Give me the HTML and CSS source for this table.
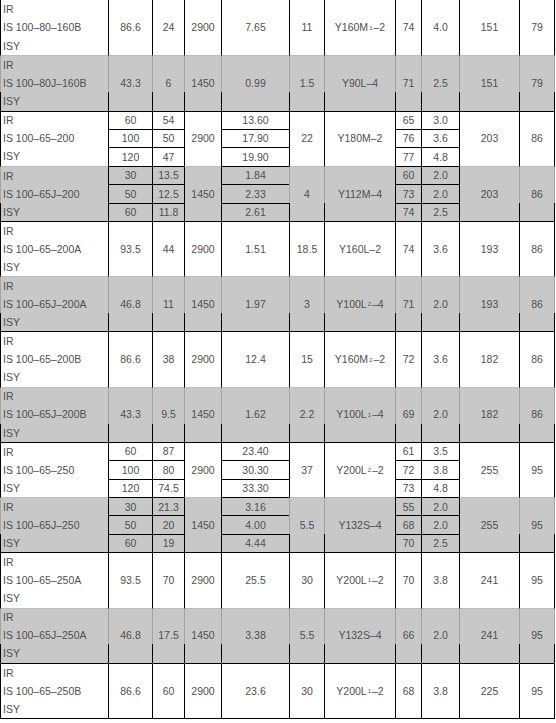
FILE: index.html
```html
<!DOCTYPE html>
<html>
<head>
<meta charset="utf-8">
<link rel="stylesheet" href="styles.css">
</head>
<body>
<div class="sheet">
  <div class="row w">
    <div class="c m name"><span>IR</span><span>IS 100–80–160B</span><span>ISY</span></div>
    <div class="c m">86.6</div><div class="c m">24</div><div class="c m">2900</div><div class="c m">7.65</div>
    <div class="c m">11</div><div class="c m">Y160M<span class="sub">1</span>–2</div><div class="c m">74</div><div class="c m">4.0</div>
    <div class="c m">151</div><div class="c m end">79</div>
  </div>
  <div class="row g">
    <div class="c m name"><span>IR</span><span>IS 100–80J–160B</span><span>ISY</span></div>
    <div class="c m">43.3</div><div class="c m">6</div><div class="c m">1450</div><div class="c m">0.99</div>
    <div class="c m">1.5</div><div class="c m">Y90L–4</div><div class="c m">71</div><div class="c m">2.5</div>
    <div class="c m">151</div><div class="c m end">79</div>
  </div>
  <div class="row w">
    <div class="c m name"><span>IR</span><span>IS 100–65–200</span><span>ISY</span></div>
    <div class="c">60</div><div class="c">54</div><div class="c m">2900</div><div class="c">13.60</div>
    <div class="c m">22</div><div class="c m">Y180M–2</div><div class="c">65</div><div class="c">3.0</div>
    <div class="c m">203</div><div class="c m end">86</div>
    <div class="c">100</div><div class="c">50</div><div class="c">17.90</div><div class="c">76</div><div class="c">3.6</div>
    <div class="c">120</div><div class="c">47</div><div class="c">19.90</div><div class="c">77</div><div class="c">4.8</div>
  </div>
  <div class="row g">
    <div class="c m name"><span>IR</span><span>IS 100–65J–200</span><span>ISY</span></div>
    <div class="c">30</div><div class="c">13.5</div><div class="c m k">1450</div><div class="c">1.84</div>
    <div class="c m">4</div><div class="c m">Y112M–4</div><div class="c">60</div><div class="c">2.0</div>
    <div class="c m k">203</div><div class="c m end">86</div>
    <div class="c">50</div><div class="c">12.5</div><div class="c">2.33</div><div class="c">73</div><div class="c">2.0</div>
    <div class="c">60</div><div class="c">11.8</div><div class="c">2.61</div><div class="c">74</div><div class="c">2.5</div>
  </div>
  <div class="row w">
    <div class="c m name"><span>IR</span><span>IS 100–65–200A</span><span>ISY</span></div>
    <div class="c m">93.5</div><div class="c m">44</div><div class="c m">2900</div><div class="c m">1.51</div>
    <div class="c m">18.5</div><div class="c m">Y160L–2</div><div class="c m">74</div><div class="c m">3.6</div>
    <div class="c m">193</div><div class="c m end">86</div>
  </div>
  <div class="row g">
    <div class="c m name"><span>IR</span><span>IS 100–65J–200A</span><span>ISY</span></div>
    <div class="c m">46.8</div><div class="c m">11</div><div class="c m">1450</div><div class="c m">1.97</div>
    <div class="c m">3</div><div class="c m">Y100L<span class="sub">2</span>–4</div><div class="c m">71</div><div class="c m">2.0</div>
    <div class="c m">193</div><div class="c m end">86</div>
  </div>
  <div class="row w">
    <div class="c m name"><span>IR</span><span>IS 100–65–200B</span><span>ISY</span></div>
    <div class="c m">86.6</div><div class="c m">38</div><div class="c m">2900</div><div class="c m">12.4</div>
    <div class="c m">15</div><div class="c m">Y160M<span class="sub">2</span>–2</div><div class="c m">72</div><div class="c m">3.6</div>
    <div class="c m">182</div><div class="c m end">86</div>
  </div>
  <div class="row g">
    <div class="c m name"><span>IR</span><span>IS 100–65J–200B</span><span>ISY</span></div>
    <div class="c m">43.3</div><div class="c m">9.5</div><div class="c m">1450</div><div class="c m">1.62</div>
    <div class="c m">2.2</div><div class="c m">Y100L<span class="sub">1</span>–4</div><div class="c m">69</div><div class="c m">2.0</div>
    <div class="c m">182</div><div class="c m end">86</div>
  </div>
  <div class="row w">
    <div class="c m name"><span>IR</span><span>IS 100–65–250</span><span>ISY</span></div>
    <div class="c">60</div><div class="c">87</div><div class="c m">2900</div><div class="c">23.40</div>
    <div class="c m">37</div><div class="c m">Y200L<span class="sub">2</span>–2</div><div class="c">61</div><div class="c">3.5</div>
    <div class="c m">255</div><div class="c m end">95</div>
    <div class="c">100</div><div class="c">80</div><div class="c">30.30</div><div class="c">72</div><div class="c">3.8</div>
    <div class="c">120</div><div class="c">74.5</div><div class="c">33.30</div><div class="c">73</div><div class="c">4.8</div>
  </div>
  <div class="row g">
    <div class="c m name"><span>IR</span><span>IS 100–65J–250</span><span>ISY</span></div>
    <div class="c">30</div><div class="c">21.3</div><div class="c m k">1450</div><div class="c">3.16</div>
    <div class="c m">5.5</div><div class="c m">Y132S–4</div><div class="c">55</div><div class="c">2.0</div>
    <div class="c m k">255</div><div class="c m end">95</div>
    <div class="c">50</div><div class="c">20</div><div class="c">4.00</div><div class="c">68</div><div class="c">2.0</div>
    <div class="c">60</div><div class="c">19</div><div class="c">4.44</div><div class="c">70</div><div class="c">2.5</div>
  </div>
  <div class="row w">
    <div class="c m name"><span>IR</span><span>IS 100–65–250A</span><span>ISY</span></div>
    <div class="c m">93.5</div><div class="c m">70</div><div class="c m">2900</div><div class="c m">25.5</div>
    <div class="c m">30</div><div class="c m">Y200L<span class="sub">1</span>–2</div><div class="c m">70</div><div class="c m">3.8</div>
    <div class="c m">241</div><div class="c m end">95</div>
  </div>
  <div class="row g">
    <div class="c m name"><span>IR</span><span>IS 100–65J–250A</span><span>ISY</span></div>
    <div class="c m">46.8</div><div class="c m">17.5</div><div class="c m">1450</div><div class="c m">3.38</div>
    <div class="c m">5.5</div><div class="c m">Y132S–4</div><div class="c m">66</div><div class="c m">2.0</div>
    <div class="c m">241</div><div class="c m end">95</div>
  </div>
  <div class="row w last">
    <div class="c m name"><span>IR</span><span>IS 100–65–250B</span><span>ISY</span></div>
    <div class="c m">86.6</div><div class="c m">60</div><div class="c m">2900</div><div class="c m">23.6</div>
    <div class="c m">30</div><div class="c m">Y200L<span class="sub">1</span>–2</div><div class="c m">68</div><div class="c m">3.8</div>
    <div class="c m">225</div><div class="c m end">95</div>
  </div>
</div>
</body>
</html>
```

FILE: styles.css
```css
* { box-sizing: border-box; }

body {
  margin: 0;
  background: #fff;
}

.sheet {
  display: grid;
  grid-template-columns: 108px 44px 32px 37px 68px 35px 71px 26px 38px 60px 36px;
  grid-template-rows: 19.5px repeat(38, 18.41px);
  width: 555px;
  font-family: "Liberation Sans", Arial, sans-serif;
  font-size: 10.5px;
  color: #4f4f4f;
}

.row { display: contents; }

.c {
  border-left: 1px solid #000;
  border-bottom: 1px solid #000;
  display: flex;
  align-items: center;
  justify-content: center;
  white-space: nowrap;
  line-height: 1;
}

.m { grid-row: span 3; }

.end { border-right: 1px solid #000; }

.name {
  flex-direction: column;
  align-items: stretch;
  justify-content: flex-start;
  padding-left: 2px;
}

.name span {
  display: flex;
  align-items: center;
  flex: 1;
}

.sub {
  font-size: 6px;
  vertical-align: -2px;
  margin: 0 1px;
}

.w .m { border-bottom-color: #bdbdbd; }
.row.last .m { border-bottom-color: #000; }

.g .c { background-color: #c8c8c8; }

.g .m {
  border-left-color: transparent;
  background:
    linear-gradient(#000, #000) left bottom / 1px 35% no-repeat border-box,
    linear-gradient(#a4a4a4, #a4a4a4) left top / 1px 100% no-repeat border-box,
    #c8c8c8;
}

.g .m.end {
  border-right-color: transparent;
  background:
    linear-gradient(#000, #000) left bottom / 1px 35% no-repeat border-box,
    linear-gradient(#a4a4a4, #a4a4a4) left top / 1px 100% no-repeat border-box,
    linear-gradient(#000, #000) right bottom / 1px 35% no-repeat border-box,
    linear-gradient(#a4a4a4, #a4a4a4) right top / 1px 100% no-repeat border-box,
    #c8c8c8;
}

.g .m.k {
  border-left-color: #000;
  background: #c8c8c8;
}
```
